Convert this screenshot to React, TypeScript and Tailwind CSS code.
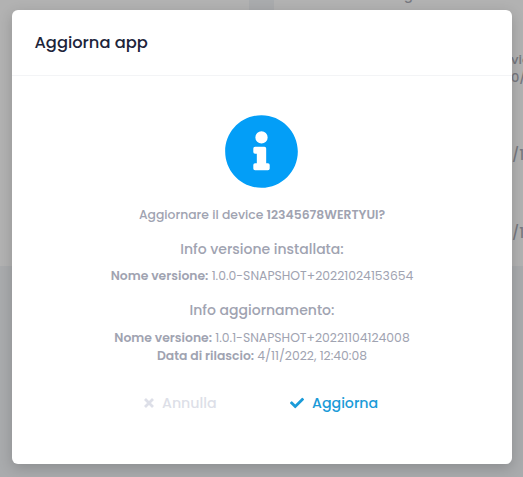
import React from "react";

function Backdrop() {
  return (
    <div className="absolute inset-0 overflow-hidden bg-[#a9abad] text-[13px] font-medium text-[#77787f]">
      <div className="flex h-[266px] gap-[25px]">
        <div className="w-[249px] bg-[#b2b2b2]" />
        <div className="relative flex-1 bg-[#b2b2b2]">
          <span className="absolute left-[130px] top-[-12px] leading-4">g</span>
          <span className="absolute left-[237px] top-[51px] leading-[18px]">vice<br />0/0</span>
          <span className="absolute left-[229px] top-[146px] text-[14px] leading-[18px]">6/11</span>
          <span className="absolute left-[229px] top-[224px] text-[14px] leading-[18px]">6/11</span>
        </div>
      </div>
    </div>
  );
}

function InfoIcon() {
  return (
    <svg className="mr-px h-[75px] w-[75px]" viewBox="0 0 512 512" fill="#039ef7">
      <path d="M256 8C119 8 8 119 8 256s111 248 248 248 248-111 248-248S393 8 256 8zm0 110a42 42 0 1 1 0 84 42 42 0 0 1 0-84zm56 254a12 12 0 0 1-12 12h-88a12 12 0 0 1-12-12v-24a12 12 0 0 1 12-12h12v-64h-12a12 12 0 0 1-12-12v-24a12 12 0 0 1 12-12h64a12 12 0 0 1 12 12v100h12a12 12 0 0 1 12 12z" />
    </svg>
  );
}

export default function App() {
  return (
    <div className="relative h-[477px] w-[523px] overflow-hidden font-['Poppins','Inter',sans-serif]">
      <Backdrop />
      <main className="relative ml-[12px] pt-[10px]">
        <section className="h-[454px] w-[500px] rounded-[6px] bg-white shadow-[0_4px_14px_rgba(0,0,0,0.18)]">
          <header className="flex h-[66px] items-center border-b border-[#f3f4f6] px-[22.5px]">
            <h1 className="text-[16.3px] font-medium leading-6 text-[#20243a]">Aggiorna app</h1>
          </header>
          <div className="flex flex-col items-center whitespace-nowrap pt-[38px] text-[12.37px] leading-[18px] text-[#a0a3b1]">
            <InfoIcon />
            <p className="mt-[17px] font-medium">
              Aggiornare il device <b className="font-semibold">12345678WERTYUI?</b>
            </p>
            <h2 className="mt-[15px] text-[14px] font-medium leading-5">Info versione installata:</h2>
            <p className="mt-[8px]">
              <b className="font-semibold">Nome versione:</b> 1.0.0-SNAPSHOT+20221024153654
            </p>
            <h2 className="mt-[15px] text-[14px] font-medium leading-5">Info aggiornamento:</h2>
            <p className="mt-[9px]">
              <b className="font-semibold">Nome versione:</b> 1.0.1-SNAPSHOT+20221104124008
            </p>
            <p>
              <b className="font-semibold">Data di rilascio:</b> 4/11/2022, 12:40:08
            </p>
          </div>
          <footer className="mt-[27px] flex pl-[132px] text-[14.2px] font-medium leading-[22px]">
            <button className="flex w-[146px] items-center text-[#dddfe8]">
              <svg className="mr-[8px] h-[10px] w-[10px]" viewBox="0 0 10 10" stroke="currentColor" strokeWidth="2.8"><path d="m1 1 8 8M9 1 1 9" /></svg>
              Annulla
            </button>
            <button className="flex items-center text-[#1b9bd8]">
              <svg className="mr-[8px] h-[14px] w-[14px]" viewBox="0 0 512 512" fill="currentColor"><path d="M173.9 439.4 7.5 273a25.6 25.6 0 0 1 0-36.2l36.2-36.2a25.6 25.6 0 0 1 36.2 0L192 312.7 432.1 72.6a25.6 25.6 0 0 1 36.2 0l36.2 36.2a25.6 25.6 0 0 1 0 36.2L210.1 439.4a25.6 25.6 0 0 1-36.2 0z" /></svg>
              Aggiorna
            </button>
          </footer>
        </section>
      </main>
    </div>
  );
}
